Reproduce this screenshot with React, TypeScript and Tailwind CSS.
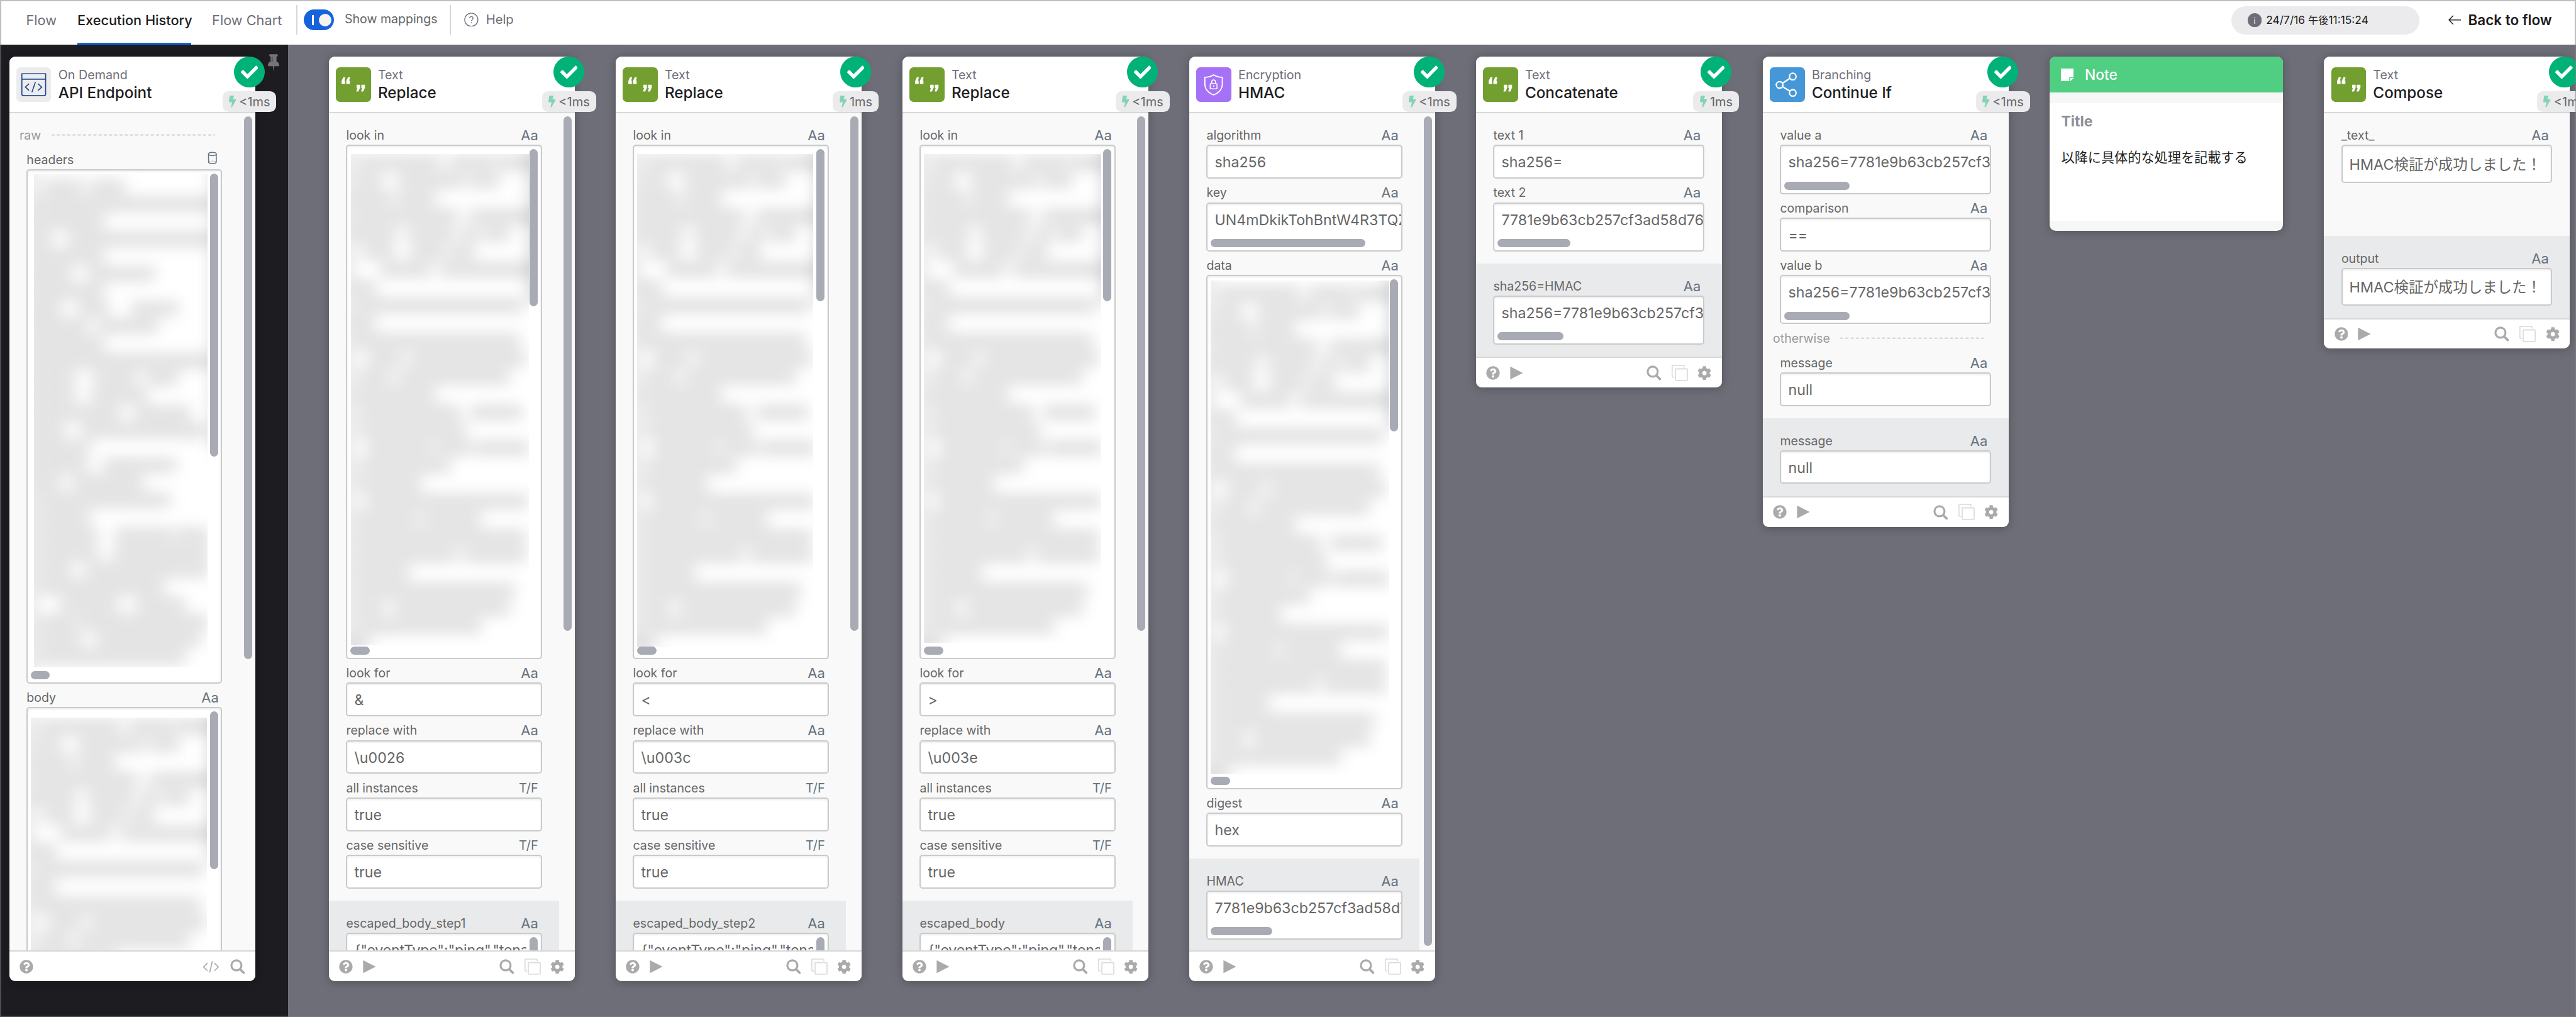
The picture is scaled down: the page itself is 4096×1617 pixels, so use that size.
import type { ReactNode } from "react";
import { FaBolt, FaCheck, FaCog, FaQuestionCircle } from "react-icons/fa";

type Seg = [number, number];

const HEADER_LINES: Seg[][] = [
  [[12, 45], [57, 86]], [[6, 172]], [[6, 66]], [[5, 15], [35, 172]], [[6, 66]],
  [[5, 35], [55, 115]], [[6, 66]], [[5, 25], [45, 70], [98, 138]], [[5, 50], [65, 118]], [[6, 66]],
  [[6, 172]], [[6, 38], [60, 98], [112, 138]], [[6, 38], [58, 108]], [[6, 82], [100, 150]], [[6, 28], [48, 165]],
  [[6, 52]], [[6, 50], [70, 136]], [[6, 24], [40, 104]], [[8, 130]], [[8, 52]],
  [[8, 60], [82, 133], [142, 168]], [[8, 60], [80, 168]], [[8, 35], [52, 168]], [[8, 125]], [[28, 80], [102, 145]],
  [[8, 38], [46, 168]], [[8, 45], [62, 160]], [[8, 145]],
];

const PAYLOAD_LINES: Seg[][] = [
  [[10, 85], [98, 136], [144, 176]], [[8, 28], [48, 108], [118, 142]], [[6, 38], [48, 80]], [[7, 102], [118, 176]],
  [[6, 42], [58, 98], [110, 122], [132, 152]], [[14, 40], [60, 90], [100, 118]], [[32, 76], [90, 154], [160, 176]], [[6, 22]],
  [[8, 165]], [[6, 21]], [[7, 162]], [[18, 48], [60, 168]], [[10, 36], [48, 152]], [[7, 80]],
  [[10, 104], [120, 164]], [[10, 110]], [[18, 76], [85, 115], [124, 171]], [[10, 94]], [[9, 66]],
  [[16, 170]], [[8, 62], [72, 124]], [[8, 168]], [[8, 100], [112, 168]], [[8, 54]], [[8, 157]],
  [[8, 30], [44, 152]], [[8, 124]], [[2, 16]],
];

function Redacted({ lines, first, pitch, barHeight }: { lines: Seg[][]; first: number; pitch: number; barHeight: number }) {
  return (
    <svg className="block size-full overflow-visible blur-[7.500px]" aria-hidden>
      <rect x="-8" y="-8" width="11" height="520" fill="#000" fillOpacity="0.1" />
      <rect x="174" y="-8" width="8" height={barHeight} fill="#a9acb5" fillOpacity="0.7" />
      {lines.map((segs, i) =>
        segs.map(([a, b]) => (
          <rect key={`${i}-${a}`} x={a - 3} y={first + i * pitch - 6} width={b - a + 6} height="12" fill="#000" fillOpacity="0.15" />
        )),
      )}
    </svg>
  );
}

function QuoteIcon() {
  return (
    <span className="flex size-[34px] rounded-[4px] bg-[#739f31]">
      <svg viewBox="0 0 34 34" className="size-full" fill="#fff">
        <path d="M5.600 16.200v-2.900L7.300 9.600h2L8.400 13h.6v3.200zM10.200 16.200v-2.900l1.700-3.700h2L13 13h.7v3.200z" />
        <path d="M23.700 17.100v2.900L22 23.700h-2l.9-3.400h-.6v-3.200zM28.400 17.100v2.900l-1.700 3.700h-2l.9-3.400h-.7v-3.200z" />
      </svg>
    </span>
  );
}

function ApiIcon() {
  return (
    <span className="flex size-[34px] rounded-[4px] bg-[#ececec]">
      <svg viewBox="0 0 34 34" className="size-full" fill="none" stroke="#1b4594" strokeWidth="1">
        <path d="M5.400 6.300h23.200v20a1.400 1.400 0 0 1-1.400 1.400H6.800a1.400 1.400 0 0 1-1.400-1.400z" />
        <path d="M5.400 11.600h23.200" />
        <path d="M12.400 16l-3.600 3.300 3.600 3.400M21.200 16l3.600 3.300-3.600 3.400M18.600 14.400l-3.400 9.800" />
      </svg>
    </span>
  );
}

function ShieldIcon() {
  return (
    <span className="flex size-[34px] rounded-[4px] bg-[#a571f7]">
      <svg viewBox="0 0 34 34" className="size-full" fill="none" stroke="#fff" strokeWidth="1.100">
        <path d="M17 7.300c2.400 1.600 5.200 2.400 8.500 2.500v6.400c0 5-3.200 8.600-8.500 10.700-5.300-2.100-8.500-5.700-8.500-10.700V9.800c3.300-.1 6.100-.9 8.500-2.500z" />
        <rect x="13.700" y="15.900" width="6.600" height="5.200" rx="0.500" strokeWidth="0.900" />
        <path d="M15.200 15.800v-1.700a1.800 1.800 0 0 1 3.600 0v1.700M17 17.700v1.400" strokeWidth="0.900" />
      </svg>
    </span>
  );
}

function BranchIcon() {
  return (
    <span className="flex size-[34px] rounded-[4px] bg-[#4597d8]">
      <svg viewBox="0 0 34 34" className="size-full" fill="none" stroke="#fff" strokeWidth="1.400">
        <circle cx="9.600" cy="17.200" r="3.200" />
        <circle cx="22.500" cy="9" r="3.200" />
        <circle cx="22.500" cy="25" r="3.200" />
        <path d="M12.400 15.500l7.400-4.800M12.400 18.900l7.400 4.400" />
      </svg>
    </span>
  );
}

const ICONS = { quote: <QuoteIcon />, api: <ApiIcon />, shield: <ShieldIcon />, branch: <BranchIcon /> };

function Label({ text, type = "Aa" }: { text: string; type?: string }) {
  return (
    <div className="flex h-[23px] justify-between pt-[4.500px] pr-[3.500px] text-[12px] leading-[19px] text-[#666]">
      <span>{text}</span>
      {type === "object" ? (
        <svg viewBox="0 0 10 13" className="mt-[1px] mr-[1.500px] h-[12.500px] w-[9.500px]" fill="none" stroke="#66727e" strokeWidth="1">
          <ellipse cx="5" cy="2.400" rx="4" ry="1.700" />
          <path d="M1 2.400v8.200c0 .9 1.800 1.600 4 1.600s4-.7 4-1.600V2.400" />
          <path d="M1.600 10.200c1.500-.7 5.200-.7 6.800 0" strokeWidth="0.500" strokeDasharray="1 .6" />
        </svg>
      ) : (
        <span className={type === "Aa" ? "text-[13.500px] text-[#66727e]" : "text-[12.300px] text-[#66727e]"}>{type}</span>
      )}
    </div>
  );
}

const BOX = "relative overflow-hidden rounded-[3px] border-[1.250px] border-[#cacaca] bg-white shadow-[inset_0_1px_2px_rgba(0,0,0,0.08)]";
const THUMB = "absolute rounded-full bg-[#a8abb4]";

function Field({ label, type, value, bar }: { label: string; type?: string; value: string; bar?: string }) {
  return (
    <div>
      <Label text={label} type={type} />
      <div className={`${BOX} ${bar ? "h-[48px]" : "h-[33px]"}`}>
        <div className="pl-[6.800px] text-[14.250px] leading-[32px] whitespace-pre text-[#666]">{value}</div>
        {bar && <div className={`${THUMB} bottom-[3px] left-[3px] h-2 ${bar}`} />}
      </div>
    </div>
  );
}

function JapaneseField({ label }: { label: string }) {
  return (
    <div>
      <Label text={label} />
      <div className={`${BOX} h-[37px]`}>
        <div className="pt-px pl-[6.500px] text-[14.400px] leading-[34px] whitespace-pre text-[#666]">HMAC検証が成功しました！</div>
      </div>
    </div>
  );
}

function BigField({ label, type, area, vbar, hbar, children }: { label: string; type?: string; area: string; vbar: string; hbar: string; children: ReactNode }) {
  return (
    <div>
      <Label text={label} type={type} />
      <div className={`${BOX} h-[502px]`}>
        <div className={`overflow-hidden ${area}`}>{children}</div>
        <div className={`${THUMB} top-[3px] right-[3px] w-2 ${vbar}`} />
        <div className={`${THUMB} bottom-[3px] left-[3px] h-2 ${hbar}`} />
      </div>
    </div>
  );
}

function ClippedOutput({ label }: { label: string }) {
  return (
    <div>
      <Label text={label} />
      <div className={`${BOX} h-[48px]`}>
        <div className="mr-[14px] overflow-hidden pl-[6.800px] text-[14.250px] leading-[32px] tracking-[-0.120px] whitespace-pre text-[#666]">{'{"eventType":"ping","tena'}</div>
        <div className={`${THUMB} top-[3px] right-[3px] h-10 w-2`} />
      </div>
    </div>
  );
}

function SectionRule({ text }: { text: string }) {
  return (
    <div className="-ml-[7px] flex h-6 items-center gap-[10px] pr-[7px] text-[12px] text-[#999]">
      <span className="pt-1">{text}</span>
      <svg className="mt-[3px] h-[2px] flex-1" preserveAspectRatio="none">
        <line x1="0" x2="100%" y1="1" y2="1" stroke="#c9c9c9" strokeWidth="1" strokeDasharray="3 2.100" />
      </svg>
    </div>
  );
}

function SearchIcon() {
  return (
    <svg viewBox="0 0 15 15" className="size-[14.500px]" fill="none" stroke="#aaa" strokeLinecap="round">
      <circle cx="6.300" cy="6.300" r="5.100" strokeWidth="2" />
      <path d="M10.200 10.400l3.400 3.300" strokeWidth="2.400" />
    </svg>
  );
}

function Footer({ trigger }: { trigger?: boolean }) {
  return (
    <div className="flex h-[30px] shrink-0 items-center rounded-b-[6px] border-t-[1.250px] border-[#d7d7dc] bg-white px-[10px] text-[#aaa]">
      <FaQuestionCircle className="size-[13.500px]" />
      {trigger ? (
        <>
          <svg viewBox="0 0 17 13" className="ml-auto h-[12.500px] w-[16.500px]" fill="none" stroke="#aaa" strokeWidth="1.100">
            <path d="M5 2.600L1 6.700l4 4M12 2.600l4 4.100-4 4M9.900.8L7.200 12.300" />
          </svg>
          <span className="ml-[10.500px]"><SearchIcon /></span>
        </>
      ) : (
        <>
          <svg viewBox="0 0 13 14" className="ml-[9.500px] h-[13.500px] w-[13px]" fill="#aaa">
            <path d="M0 .4l12.800 6.600L0 13.600z" />
          </svg>
          <span className="ml-auto"><SearchIcon /></span>
          <svg viewBox="0 0 16 16" className="ml-[10px] size-4" fill="none" stroke="#ddd" strokeWidth="1.100">
            <rect x="3.700" y="4" width="11.700" height="11.300" rx="0.700" />
            <path d="M2.500 12.200H1.300a.8.8 0 0 1-.8-.8V1.300a.8.8 0 0 1 .8-.8h10.200a.8.8 0 0 1 .8.8v1.300" />
          </svg>
          <FaCog className="ml-[9.500px] size-[13.700px]" />
        </>
      )}
    </div>
  );
}

type CardProps = {
  icon: keyof typeof ICONS;
  kind: string;
  title: string;
  time?: string;
  thumb?: string;
  trigger?: boolean;
  inputs: ReactNode;
  outputs?: ReactNode;
  body?: string;
};

function Card({ icon, kind, title, time = "<1ms", thumb, trigger, inputs, outputs, body = "" }: CardProps) {
  return (
    <section className={`relative flex w-[240px] shrink-0 flex-col rounded-[6px] bg-[#f9f9f9] shadow-[0_1px_9px_rgba(0,0,0,0.25)] ${thumb ? "h-[902.500px]" : ""}`}>
      <header className="flex h-[55px] shrink-0 rounded-t-[6px] border-b-[1.250px] border-[#d7d7dc] bg-white pt-[10px] pl-[7px]">
        {ICONS[icon]}
        <div className="-mt-[0.500px] ml-[7px]">
          <div className="text-[12.100px] leading-[17px] text-[#6e6e78]">{kind}</div>
          <div className="text-[14.900px] leading-[17px] font-medium text-[#1d1d21]">{title}</div>
        </div>
        <div className="absolute top-0 right-[-24.500px] flex w-[60px] flex-col items-center">
          <span className="flex size-[30px] items-center justify-center rounded-full bg-[#00b277] text-white">
            <FaCheck className="size-[17px]" />
          </span>
          <span className="mt-[3.500px] flex h-[20.500px] items-center rounded-[6px] bg-[#ebebed] pr-[6px] pl-[6.300px] text-[12.300px] text-[#666]">
            <FaBolt className="mr-[3px] h-[11.500px] w-[7px] text-[#82d4b4]" preserveAspectRatio="none" />
            {time}
          </span>
        </div>
      </header>
      <div className={`relative flex flex-col ${thumb ? "min-h-0 flex-1 overflow-hidden" : ""}`}>
        <div className={`shrink-0 pt-2 pb-3 pl-[17px] ${thumb ? "pr-8" : "pr-[17px]"} ${body}`}>{inputs}</div>
        {outputs && <div className={`shrink-0 bg-[#e9eaec] pt-2 pb-3 pl-[17px] ${thumb ? "mr-[15px] pr-[17px]" : "pr-[17px]"}`}>{outputs}</div>}
        {thumb && <div className={`${THUMB} top-[3px] right-[3px] w-2 ${thumb}`} />}
      </div>
      <Footer trigger={trigger} />
    </section>
  );
}

function ReplaceCard({ look, replacement, output, time, vbar, area }: { look: string; replacement: string; output: string; time: string; vbar: string; area: string }) {
  return (
    <Card
      icon="quote"
      kind="Text"
      title="Replace"
      time={time}
      thumb="h-[502.500px]"
      inputs={
        <>
          <BigField label="look in" area={area} vbar={vbar} hbar="w-[19px]">
            <Redacted lines={PAYLOAD_LINES} first={8.5} pitch={17.4} barHeight={153} />
          </BigField>
          <Field label="look for" value={look} />
          <Field label="replace with" value={replacement} />
          <Field label="all instances" type="T/F" value="true" />
          <Field label="case sensitive" type="T/F" value="true" />
        </>
      }
      outputs={<ClippedOutput label={output} />}
    />
  );
}

function NoteCard() {
  return (
    <section className="flex h-[170px] w-[228px] shrink-0 flex-col overflow-hidden rounded-[6px] bg-[#f7f7f7] pb-[10px] shadow-[0_1px_9px_rgba(0,0,0,0.25)]">
      <div className="flex h-[35px] shrink-0 items-center bg-[#50cf83] pl-[11px] text-[14px] font-medium text-white">
        <svg viewBox="0 0 13 13" className="mr-[11px] size-[12.500px]" fill="#fff">
          <path d="M.8 0h11.400a.8.8 0 0 1 .8.8v7.700H9.300a.8.8 0 0 0-.8.8V13H.8a.8.8 0 0 1-.8-.8V.8A.8.8 0 0 1 .8 0zM9.500 9.500H13L9.500 13z" />
        </svg>
        Note
      </div>
      <div className="mt-[10px] flex-1 bg-white pt-[8.500px] pl-[11.500px]">
        <div className="text-[14.100px] leading-[20px] font-bold text-[#8e8e97]">Title</div>
        <div className="mt-[14.500px] text-[13px] leading-[20px] text-[#1d1d21]">以降に具体的な処理を記載する</div>
      </div>
    </section>
  );
}

function TopBar() {
  return (
    <nav className="flex h-[43.500px] shrink-0 bg-white pl-[25.500px] text-[#6e6e78]">
      <div className="flex text-[13.350px] leading-[40.500px]">
        <span className="w-[50px]">Flow</span>
        <span className="h-[43.500px] w-[111px] border-b-[2px] border-[#1662dd] font-medium whitespace-nowrap text-[#1d1d21]">Execution History</span>
        <span className="ml-[20.500px] w-[82px] whitespace-nowrap">Flow Chart</span>
      </div>
      <div className="mt-[5px] flex h-[29px] w-[151.500px] items-center border-x-[1.250px] border-[#d7d7dc] pl-[6.300px] text-[12px] text-[#666]">
        <span className="flex h-[20.500px] w-[29.500px] items-center justify-between rounded-full bg-[#1662dd] pr-[2.500px] pl-2">
          <i className="h-[10px] w-[2px] bg-white" />
          <i className="size-3 rounded-full bg-[#f4f4f4]" />
        </span>
        <span className="-mt-[1px] ml-[10.500px] whitespace-nowrap">Show mappings</span>
      </div>
      <div className="flex h-[38px] items-center pl-[13px] text-[12.400px]">
        <svg viewBox="0 0 28 28" className="mr-[7px] size-[14px]" fill="none" stroke="#6e6e78" strokeWidth="1.600">
          <circle cx="14" cy="14" r="12.900" />
          <path d="M10.600 11.200c0-4.600 6.900-4.600 6.900-.3 0 2.700-3.400 2.900-3.400 5.600M14 18.700v1.900" />
        </svg>
        Help
      </div>
      <div className="mt-[6px] ml-auto flex h-[27.500px] w-[183.500px] items-center rounded-full bg-[#ebebed] pl-[15.500px] text-[10.700px] text-[#1d1d21]">
        <svg viewBox="0 0 14 14" className="mr-[4.500px] size-[13.700px]">
          <circle cx="7" cy="7" r="7" fill="#6e6e78" />
          <path d="M7 3.700v1M7 5.900v4.700" stroke="#ebebed" strokeWidth="0.900" />
        </svg>
        <span className="leading-none whitespace-nowrap">24/7/16 <span className="text-[10px]">午後</span>11:15:24</span>
      </div>
      <div className="mr-[23.500px] ml-[28px] flex h-[39.500px] items-center text-[13.800px] font-semibold whitespace-nowrap text-[#1d1d21]">
        <svg viewBox="0 0 13 10" className="mr-[7px] h-[9.500px] w-[12.500px]" fill="none" stroke="#1d1d21" strokeWidth="0.900">
          <path d="M13 5H.7M5 .5L.6 5 5 9.500" />
        </svg>
        Back to flow
      </div>
    </nav>
  );
}

export default function App() {
  return (
    <div className="relative flex h-[992.800px] w-[2515px] flex-col overflow-hidden bg-[#6e6e78] font-['Inter','Noto_Sans_CJK_JP',sans-serif] [zoom:1.6286]">
      <TopBar />
      <main className="flex min-h-0 flex-1 items-start">
        <aside className="flex h-full w-[281px] shrink-0 items-start bg-[#1d1c21] pt-3 pl-[9px]">
          <Card
            icon="api"
            kind="On Demand"
            title="API Endpoint"
            thumb="h-[530px]"
            trigger
            inputs={
              <>
                <SectionRule text="raw" />
                <BigField label="headers" type="object" area="mt-[3.500px] ml-[6px] h-[481.500px] w-[169.500px]" vbar="h-[276px]" hbar="w-[18.500px]">
                  <Redacted lines={HEADER_LINES} first={12.2} pitch={17} barHeight={278} />
                </BigField>
                <BigField label="body" area="mt-[9px] ml-[3px] h-[480px] w-[171.500px]" vbar="h-[154px]" hbar="w-[18.500px]">
                  <Redacted lines={PAYLOAD_LINES} first={8.5} pitch={17.4} barHeight={148} />
                </BigField>
              </>
            }
          />
          <svg viewBox="0 0 11 17" className="-mt-[3px] ml-[12.500px] h-[17px] w-[11px]" fill="#747474">
            <path d="M1.300 1c0-.6.300-.9.900-.9h6.600c.6 0 .9.300.9.900 0 .8-.3 1.300-1.300 1.500v4.700c1.800.7 2.600 2 2.600 3.800 0 .5-.3.800-.8.800H6.100L5.500 17l-.6-5.200H.8c-.5 0-.8-.3-.8-.8 0-1.800.8-3.100 2.600-3.800V2.500C1.600 2.300 1.300 1.800 1.300 1z" />
            <path d="M4.100 2.800v4.700" stroke="#1d1c21" strokeWidth="0.600" />
          </svg>
        </aside>
        <div className="flex items-start gap-10 pt-3 pl-10">
          <ReplaceCard look="&" replacement="\u0026" output="escaped_body_step1" time="<1ms" vbar="h-[153.500px]" area="mt-[8px] ml-[3.500px] h-[479px] w-[173.500px]" />
          <ReplaceCard look="<" replacement="\u003c" output="escaped_body_step2" time="1ms" vbar="h-[148.500px]" area="mt-[8px] ml-[3px] h-[481px] w-[171.500px]" />
          <ReplaceCard look=">" replacement="\u003e" output="escaped_body" time="<1ms" vbar="h-[148.500px]" area="mt-[8px] ml-[3px] h-[477px] w-[173px]" />
          <Card
            icon="shield"
            kind="Encryption"
            title="HMAC"
            thumb="h-[810px]"
            inputs={
              <>
                <Field label="algorithm" value="sha256" />
                <Field label="key" value="UN4mDkikTohBntW4R3TQZ" bar="w-[151px]" />
                <BigField label="data" area="mt-[4px] ml-[3px] h-[482px] w-[174px]" vbar="h-[148.500px]" hbar="w-[19px]">
                  <Redacted lines={PAYLOAD_LINES} first={12.5} pitch={17.4} barHeight={153} />
                </BigField>
                <Field label="digest" value="hex" />
              </>
            }
            outputs={<Field label="HMAC" value="7781e9b63cb257cf3ad58d76" bar="w-[60px]" />}
          />
          <Card
            icon="quote"
            kind="Text"
            title="Concatenate"
            time="1ms"
            inputs={
              <>
                <Field label="text 1" value="sha256=" />
                <Field label="text 2" value="7781e9b63cb257cf3ad58d76" bar="w-[71px]" />
              </>
            }
            outputs={<Field label="sha256=HMAC" value="sha256=7781e9b63cb257cf3" bar="w-[64px]" />}
          />
          <Card
            icon="branch"
            kind="Branching"
            title="Continue If"
            inputs={
              <>
                <Field label="value a" value="sha256=7781e9b63cb257cf3" bar="w-[63.500px]" />
                <Field label="comparison" value="==" />
                <Field label="value b" value="sha256=7781e9b63cb257cf3" bar="w-[63.500px]" />
                <SectionRule text="otherwise" />
                <Field label="message" value="null" />
              </>
            }
            outputs={<Field label="message" value="null" />}
          />
          <NoteCard />
          <Card
            icon="quote"
            kind="Text"
            title="Compose"
            body="min-h-[120px]"
            inputs={<JapaneseField label="_text_" />}
            outputs={<JapaneseField label="output" />}
          />
        </div>
      </main>
      <div className="pointer-events-none absolute inset-0 border-[1.250px] border-[#808080]/50" />
    </div>
  );
}
